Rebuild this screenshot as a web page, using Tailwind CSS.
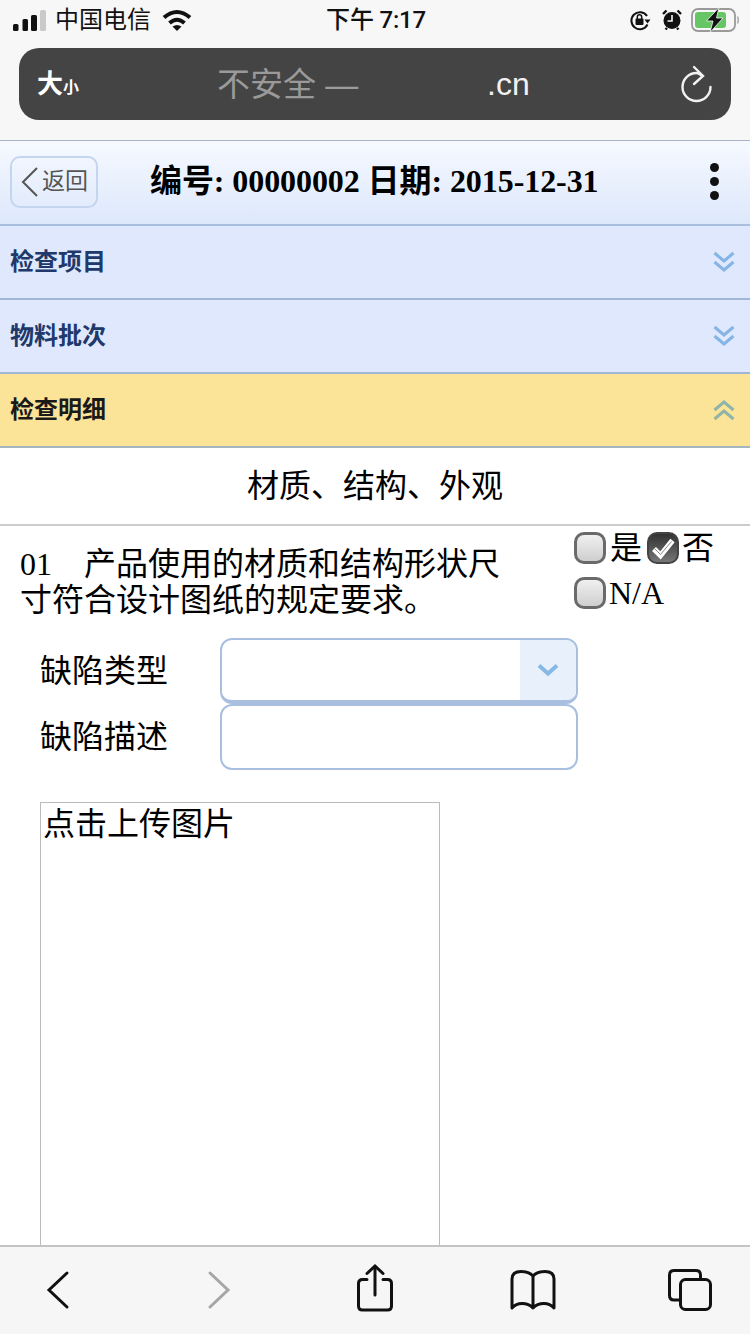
<!DOCTYPE html>
<html lang="zh-CN">
<head>
    <meta charset="UTF-8">
    <meta name="viewport" content="width=device-width, initial-scale=1.0">
    <title>检查明细</title>
    <script src="https://cdn.jsdelivr.net/npm/@tailwindcss/browser@4"></script>
</head>
<body class="bg-white">
<div class="w-[750px] h-[1334px] overflow-hidden flex flex-col font-['Liberation_Serif','Noto_Sans_CJK_SC',serif] text-black">

    <!-- safari top -->
    <div class="h-[141px] shrink-0 bg-[#f7f7f7] border-b border-[#a9b2c6] font-['Liberation_Sans','Noto_Sans_CJK_SC',sans-serif]">
        <div class="h-[40px] px-[11px] flex items-center text-[24px] text-[#111]">
            <div class="flex-1 flex items-center pl-[2px]">
                <svg width="33" height="21" viewBox="0 0 33 21">
                    <rect x="0" y="14" width="5.5" height="7" rx="1.5" fill="#111"/>
                    <rect x="9.5" y="9" width="5.5" height="12" rx="1.5" fill="#111"/>
                    <rect x="18" y="5" width="6" height="16" rx="1.5" fill="#111"/>
                    <rect x="27" y="0" width="6" height="21" rx="1.5" fill="#c9c9c9"/>
                </svg>
                <span class="ml-[9px] leading-none">中国电信</span>
                <svg class="ml-[11px]" width="30" height="22" viewBox="0 0 30 22" fill="none" stroke="#111" stroke-width="4">
                    <path d="M2 8.5 Q15 -2.5 28 8.5"/>
                    <path d="M7.5 14 Q15 7.5 22.5 14"/>
                    <path d="M15 22 L10.5 17.5 Q15 14.5 19.5 17.5 Z" fill="#111" stroke="none"/>
                </svg>
            </div>
            <span class="leading-none font-medium tracking-[-0.2px] font-['Roboto','Noto_Sans_CJK_SC',sans-serif]">下午 7:17</span>
            <div class="flex-1 flex items-center justify-end">
                <svg width="22" height="22" viewBox="0 0 22 22" fill="none">
                    <path d="M18 7 A8.5 8.5 0 1 0 18.5 15.5" stroke="#111" stroke-width="2"/>
                    <path d="M15.5 10.5 L21.5 10.5 L18.5 14.5 Z" fill="#111"/>
                    <rect x="6.5" y="9.5" width="8" height="6.5" rx="1" fill="#111"/>
                    <path d="M8.3 10 V8 A2.2 2.2 0 0 1 12.7 8 V10" stroke="#111" stroke-width="1.5"/>
                </svg>
                <svg class="ml-[10px]" width="22" height="22" viewBox="0 0 22 22" fill="none">
                    <circle cx="11" cy="11.5" r="8.5" fill="#111"/>
                    <path d="M11 6 V12 H6.5" stroke="#f7f7f7" stroke-width="1.6"/>
                    <path d="M2 5 L5.5 1.5 M20 5 L16.5 1.5 M4.5 20.5 L6 19 M17.5 20.5 L16 19" stroke="#111" stroke-width="2.4"/>
                </svg>
                <svg class="ml-[8px]" width="48" height="26" viewBox="0 0 48 26" fill="none">
                    <rect x="1" y="2" width="43" height="22" rx="6" stroke="#9a9a9a" stroke-width="1.8"/>
                    <rect x="4" y="5" width="31" height="16" rx="3" fill="#66c666"/>
                    <path d="M46.5 9.5 Q48 13 46.5 16.5" stroke="#a8a8a8" stroke-width="1.5"/>
                    <path d="M28 0.5 L15.5 14 H22 L19 25.5 L32 11 H25.5 Z" fill="#111" stroke="#f7f7f7" stroke-width="0.8"/>
                </svg>
            </div>
        </div>
        <div class="mt-[8px] mx-[19px] h-[72px] rounded-[20px] bg-[#444444] flex items-center pl-[18px] pr-[19px]">
            <div class="w-[180px] flex items-baseline text-white font-bold">
                <span class="text-[26px] leading-none">大</span><span class="text-[16px] leading-none">小</span>
            </div>
            <span class="w-[270px] text-[33px] leading-none text-[#9a9a9a] whitespace-nowrap">不安全 —</span>
            <span class="text-[32px] leading-none text-[#f2f2f2]">.cn</span>
            <svg class="ml-auto" width="32" height="42" viewBox="0 0 32 42" fill="none" stroke="#f2f2f2" stroke-width="2.4" stroke-linecap="round">
                <path d="M22 13 Q19 10 16.5 10 A14 14 0 1 0 30.5 24"/>
                <path d="M14 4 L23 13 L14 21"/>
            </svg>
        </div>
    </div>

    <!-- page title -->
    <div class="h-[85px] shrink-0 flex items-center pl-[10px] pr-[31px] pb-[2px] border-b-2 border-[#a8bfe0] bg-gradient-to-b from-[#f6f9ff] to-[#dde8fb]">
        <div class="w-[88px] h-[52px] rounded-[10px] border-2 border-[#c3d5ef] flex items-center pl-[8px] text-[23px] text-[#555] font-['Liberation_Sans','Noto_Sans_CJK_SC',sans-serif]">
            <svg width="20" height="32" viewBox="0 0 20 32" fill="none" stroke="#555" stroke-width="2"><path d="M17 2 L3 16 L17 30"/></svg>
            <span class="ml-[2px] leading-none whitespace-nowrap">返回</span>
        </div>
        <div class="ml-[52px] mb-[1px] text-[32px] font-bold leading-none whitespace-nowrap tracking-[-0.08px]">编号: 00000002 日期: 2015-12-31</div>
        <div class="ml-auto flex flex-col gap-[5px]">
            <span class="w-[9px] h-[9px] rounded-full bg-[#111]"></span>
            <span class="w-[9px] h-[9px] rounded-full bg-[#111]"></span>
            <span class="w-[9px] h-[9px] rounded-full bg-[#111]"></span>
        </div>
    </div>

    <!-- accordion -->
    <div class="h-[74px] shrink-0 flex items-center justify-between pl-[10px] pr-[15px] bg-[#dfe8fc] border-b-2 border-[#9fb6d6] text-[24px] font-bold text-[#20396a] font-['Liberation_Sans','Noto_Sans_CJK_SC',sans-serif]">
        <span>检查项目</span>
        <svg width="22" height="22" viewBox="0 0 22 22" fill="none" stroke="#86b4e4" stroke-width="3"><path d="M1.5 2 L11 10 L20.5 2"/><path d="M1.5 11 L11 19 L20.5 11"/></svg>
    </div>
    <div class="h-[74px] shrink-0 flex items-center justify-between pl-[10px] pr-[15px] bg-[#dfe8fc] border-b-2 border-[#9fb6d6] text-[24px] font-bold text-[#20396a] font-['Liberation_Sans','Noto_Sans_CJK_SC',sans-serif]">
        <span>物料批次</span>
        <svg width="22" height="22" viewBox="0 0 22 22" fill="none" stroke="#86b4e4" stroke-width="3"><path d="M1.5 2 L11 10 L20.5 2"/><path d="M1.5 11 L11 19 L20.5 11"/></svg>
    </div>
    <div class="h-[74px] shrink-0 flex items-center justify-between pl-[10px] pr-[15px] bg-[#fbe398] border-b-2 border-[#a3b5bd] text-[24px] font-bold text-[#1a1a1a] font-['Liberation_Sans','Noto_Sans_CJK_SC',sans-serif]">
        <span>检查明细</span>
        <svg width="22" height="22" viewBox="0 0 22 22" fill="none" stroke="#8fb5a8" stroke-width="3"><path d="M1.5 11 L11 3 L20.5 11"/><path d="M1.5 20 L11 12 L20.5 20"/></svg>
    </div>

    <!-- content -->
    <div class="flex-1 min-h-0 overflow-hidden bg-white">
        <div class="h-[78px] flex items-center justify-center border-b-2 border-[#cccccc] text-[32px] leading-none">材质、结构、外观</div>

        <div class="flex pl-[20px] pt-[20px]">
            <div class="w-[480px] text-[32px] leading-[36px]">01&nbsp;&nbsp;&nbsp;&nbsp;产品使用的材质和结构形状尺寸符合设计图纸的规定要求。</div>
            <div class="ml-[74px] -mt-[21px] w-[160px] flex flex-wrap content-start text-[32px] leading-none">
                <div class="flex items-center h-[45px]">
                    <span class="w-[32px] h-[32px] rounded-[10px] border-[3px] border-[#6a6a6a] bg-gradient-to-b from-[#f0f0f0] to-[#cfcfcf]"></span>
                    <span class="ml-[4px]">是</span>
                </div>
                <div class="flex items-center h-[45px] ml-[5px]">
                    <span class="w-[32px] h-[32px] rounded-[10px] border-2 border-[#444] bg-gradient-to-b from-[#333] to-[#777] flex items-center justify-center">
                        <svg class="shrink-0" width="26" height="26" viewBox="0 0 26 26" fill="none">
                            <path d="M4 14 L10.5 20.5 L22.5 5.5" stroke="#fff" stroke-width="5.5"/>
                            <path d="M5 14 L10.5 19.5 L21.5 6.5" stroke="#888" stroke-width="1"/>
                        </svg>
                    </span>
                    <span class="ml-[3px]">否</span>
                </div>
                <div class="flex items-center h-[45px]">
                    <span class="w-[32px] h-[32px] rounded-[10px] border-[3px] border-[#6a6a6a] bg-gradient-to-b from-[#f0f0f0] to-[#cfcfcf]"></span>
                    <span class="ml-[3px]">N/A</span>
                </div>
            </div>
        </div>

        <div class="mt-[20px] pl-[40px] flex items-center h-[66px]">
            <span class="w-[180px] text-[32px] leading-none">缺陷类型</span>
            <div class="w-[358px] h-[66px] rounded-[12px] border-2 border-[#a8bfe0] border-b-4 flex justify-end overflow-hidden">
                <div class="w-[56px] bg-[#e8f0fb] flex items-center justify-center">
                    <svg width="22" height="14" viewBox="0 0 22 14" fill="none" stroke="#86b9e6" stroke-width="4"><path d="M2 2.5 L11 10.5 L20 2.5"/></svg>
                </div>
            </div>
        </div>
        <div class="pl-[40px] flex items-center h-[66px]">
            <span class="w-[180px] text-[32px] leading-none">缺陷描述</span>
            <div class="w-[358px] h-[66px] rounded-[12px] border-2 border-[#a8bfe0]"></div>
        </div>

        <div class="mt-[32px] ml-[40px] w-[400px] h-[600px] border border-[#bbbbbb] pl-[2px] pt-[2px] text-[32px] leading-[38px]">点击上传图片</div>
    </div>

    <!-- safari bottom -->
    <div class="h-[89px] shrink-0 bg-[#f6f6f7] border-t-2 border-[#c4c4c4] flex justify-center items-start pt-[15px]">
        <div class="w-[158px] shrink-0 flex justify-center">
            <svg width="40" height="56" viewBox="0 0 40 56" fill="none" stroke="#111" stroke-width="3" stroke-linecap="round"><path d="M28 11 L10 28 L28 45"/></svg>
        </div>
        <div class="w-[158px] shrink-0 flex justify-center">
            <svg width="40" height="56" viewBox="0 0 40 56" fill="none" stroke="#a6a6a6" stroke-width="3" stroke-linecap="round"><path d="M13 11 L31 28 L13 45"/></svg>
        </div>
        <div class="w-[158px] shrink-0 flex justify-center">
            <svg width="40" height="56" viewBox="0 0 40 56" fill="none" stroke="#111" stroke-width="3" stroke-linecap="round">
                <path d="M12 17.5 H7.5 Q3.5 17.5 3.5 21.5 V44 Q3.5 48 7.5 48 H32.5 Q36.5 48 36.5 44 V21.5 Q36.5 17.5 32.5 17.5 H28"/>
                <path d="M20 33 V4.5"/>
                <path d="M12 11.5 L20 4 L28 11.5"/>
            </svg>
        </div>
        <div class="w-[158px] shrink-0 flex justify-center">
            <svg width="46" height="56" viewBox="0 0 46 56" fill="none" stroke="#111" stroke-width="3" stroke-linejoin="round">
                <path d="M23 14 Q19 9.5 11 9.5 Q2 9.5 2 17 V46 Q6 41.5 12 41.5 Q19 41.5 23 46 Q27 41.5 34 41.5 Q40 41.5 44 46 V17 Q44 9.5 35 9.5 Q27 9.5 23 14 Z M23 14 V46"/>
            </svg>
        </div>
        <div class="w-[158px] shrink-0 flex justify-center">
            <svg width="46" height="56" viewBox="0 0 46 56" fill="none" stroke="#111" stroke-width="3">
                <path d="M11 38 H6 Q1.5 38 1.5 33.5 V13 Q1.5 8.5 6 8.5 H28 Q32.5 8.5 32.5 13 V17"/>
                <rect x="12.5" y="17.5" width="30" height="30" rx="5"/>
            </svg>
        </div>
    </div>
</div>
</body>
</html>
